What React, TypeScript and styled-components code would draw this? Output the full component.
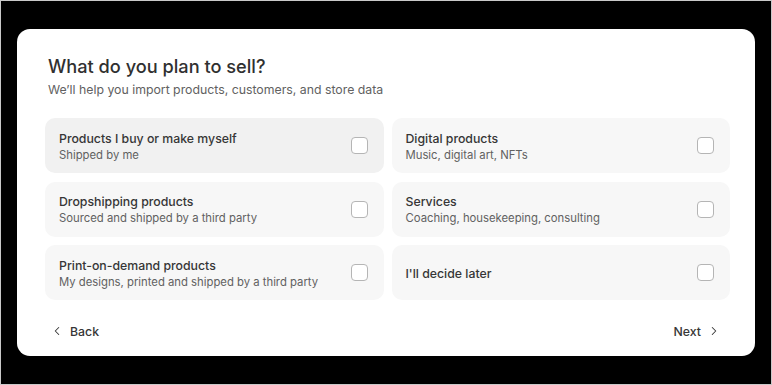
import React from "react";
import styled, { createGlobalStyle } from "styled-components";
import { ChevronLeft, ChevronRight } from "lucide-react";

const options = [
  { title: "Products I buy or make myself", sub: "Shipped by me", active: true },
  { title: "Digital products", sub: "Music, digital art, NFTs" },
  { title: "Dropshipping products", sub: "Sourced and shipped by a third party" },
  { title: "Services", sub: "Coaching, housekeeping, consulting" },
  { title: "Print-on-demand products", sub: "My designs, printed and shipped by a third party" },
  { title: "I'll decide later" },
];

const GlobalStyle = createGlobalStyle`
  html, body {
    margin: 0;
    padding: 0;
    background: #000;
  }
  body {
    font-family: Inter, "Noto Sans", sans-serif;
    -webkit-font-smoothing: antialiased;
  }
`;

const Frame = styled.div`
  box-sizing: border-box;
  width: 772px;
  height: 385px;
  border: 1px solid #c9c9c9;
  background: #000;
  padding: 28px 0 0 16px;
`;

const Sheet = styled.div`
  box-sizing: border-box;
  width: 738px;
  height: 327px;
  background: #fff;
  border-radius: 13px;
  padding: 24px 25px 0 28px;
`;

const Header = styled.div`
  padding-left: 3px;
`;

const Title = styled.h1`
  margin: 0;
  font-size: 18.2px;
  line-height: 26px;
  font-weight: 500;
  color: #303030;
`;

const Subtitle = styled.p`
  margin: 2px 0 0;
  font-size: 12.3px;
  line-height: 18px;
  color: #616161;
`;

const Grid = styled.div`
  margin-top: 19px;
  display: grid;
  grid-template-columns: 1fr 1fr;
  grid-auto-rows: 55px;
  column-gap: 8px;
  row-gap: 8.5px;
`;

const Card = styled.label<{ $active?: boolean }>`
  display: flex;
  align-items: center;
  justify-content: space-between;
  padding: 0 16px 0 14px;
  border-radius: 10px;
  background: ${({ $active }) => ($active ? "#f1f1f1" : "#f7f7f7")};
  cursor: pointer;
`;

const Texts = styled.div`
  display: flex;
  flex-direction: column;
  padding-top: 2px;
`;

const CardTitle = styled.span`
  font-size: 12.3px;
  line-height: 16px;
  font-weight: 500;
  color: #363636;
`;

const CardSub = styled.span`
  font-size: 11.3px;
  line-height: 16px;
  color: #616161;
`;

const Box = styled.span`
  box-sizing: border-box;
  width: 17px;
  height: 17px;
  border: 1.5px solid #b5b5b5;
  border-radius: 4px;
  background: #fff;
`;

const Footer = styled.div`
  margin-top: 17px;
  height: 28px;
  display: flex;
  align-items: center;
  justify-content: space-between;
  padding: 0 9px 0 5px;
`;

const NavButton = styled.button`
  display: flex;
  align-items: center;
  gap: 6px;
  border: 0;
  background: none;
  padding: 0;
  font-family: inherit;
  font-size: 12.3px;
  font-weight: 500;
  color: #363636;
  cursor: pointer;
`;

const App = () => {
  return (
    <>
      <GlobalStyle />
      <Frame>
        <Sheet>
          <Header>
            <Title>What do you plan to sell?</Title>
            <Subtitle>We’ll help you import products, customers, and store data</Subtitle>
          </Header>
          <Grid>
            {options.map((item, index) => (
              <Card key={index} $active={item.active}>
                <Texts>
                  <CardTitle>{item.title}</CardTitle>
                  {item.sub && <CardSub>{item.sub}</CardSub>}
                </Texts>
                <Box />
              </Card>
            ))}
          </Grid>
          <Footer>
            <NavButton>
              <ChevronLeft size={14} strokeWidth={1.75} />
              Back
            </NavButton>
            <NavButton>
              Next
              <ChevronRight size={14} strokeWidth={1.75} />
            </NavButton>
          </Footer>
        </Sheet>
      </Frame>
    </>
  );
};

export default App;
